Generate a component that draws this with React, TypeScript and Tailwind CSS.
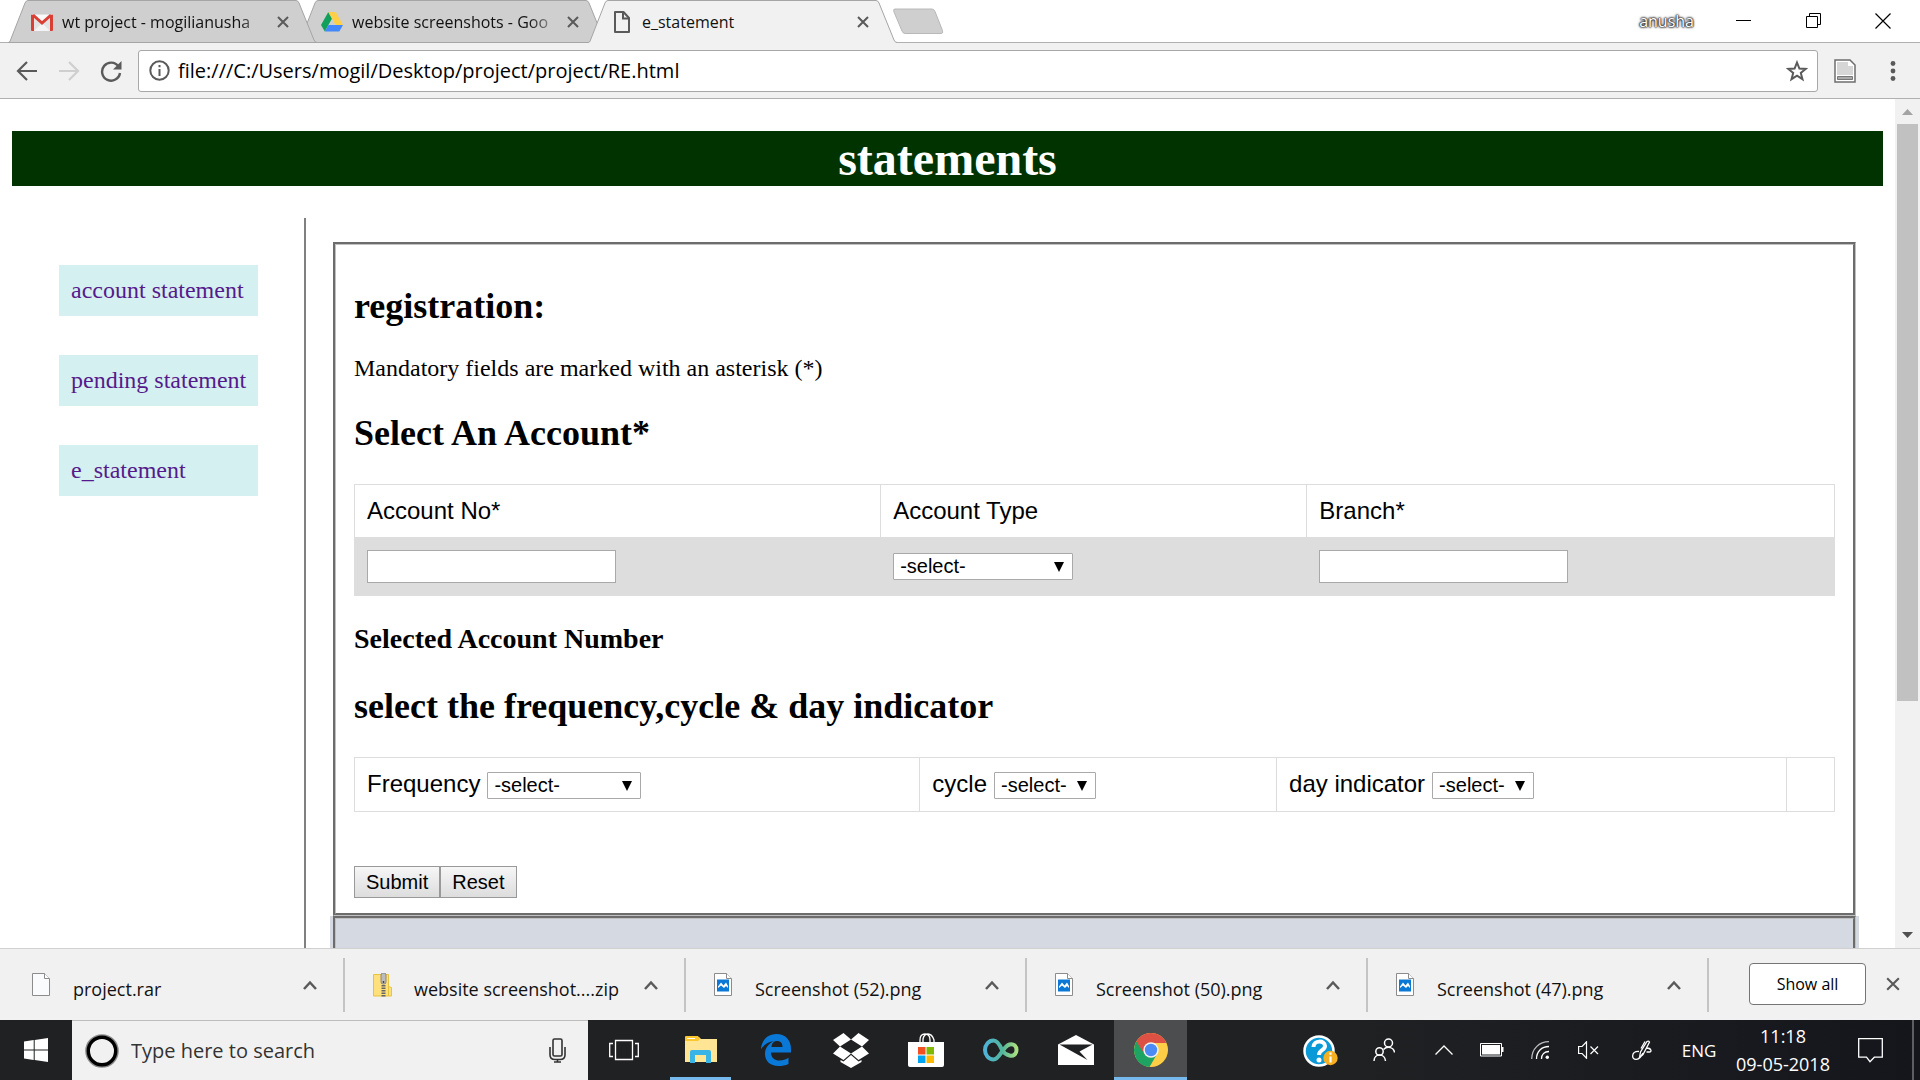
import type { ReactNode } from "react";

const uiFont = "font-['Open_Sans','Noto_Sans',sans-serif]";

/* ---------- small icons ---------- */

function FileIcon() {
  return (
    <svg width="24" height="24" viewBox="0 0 24 24" fill="none" stroke="#5a5a5a" strokeWidth="2">
      <path d="M5 2h8.500l5.500 6v14H5z" strokeLinejoin="round" />
      <path d="M13 2.500V8.500h6" />
    </svg>
  );
}

function GmailIcon() {
  return (
    <svg width="24" height="24" viewBox="0 0 24 24">
      <rect x="1" y="4" width="22" height="17" rx="1" fill="#e3e3e3" />
      <path d="M4 21 12 13l8 8z" fill="#f4f4f4" />
      <path d="M3 5l9 8 9-8" fill="#fafafa" stroke="#d93f33" strokeWidth="3" />
      <path d="M1 5.500C1 4 2 4 4 5.500V21H2a1 1 0 0 1-1-1zM23 5.500C23 4 22 4 20 5.500V21h2a1 1 0 0 0 1-1z" fill="#d93f33" />
    </svg>
  );
}

function DriveIcon() {
  return (
    <svg width="24" height="24" viewBox="0 0 24 24">
      <path d="M8.300 2 1 15l3.800 6.500L12 8.500z" fill="#11a05c" />
      <path d="M8.300 2h7.500L23 15h-7.500z" fill="#ffcf48" />
      <path d="M4.800 21.500 8.500 15H23l-3.700 6.500z" fill="#4387fd" />
    </svg>
  );
}

function CrossIcon({ size = 12, width = 2, color = "#5a5a5a" }: { size?: number; width?: number; color?: string }) {
  return (
    <svg width={size} height={size} viewBox="0 0 12 12" stroke={color} strokeWidth={width} fill="none">
      <path d="M1 1l10 10M11 1 1 11" />
    </svg>
  );
}

function ChevronUp() {
  return (
    <svg width="14" height="10" viewBox="0 0 14 10" fill="none" stroke="#5a5a5a" strokeWidth="2.500">
      <path d="M1 9l6-6.500L13 9" />
    </svg>
  );
}

/* ---------- browser chrome ---------- */

type TabProps = { icon: ReactNode; title: string; active?: boolean; layer: string };

function Tab({ icon, title, active, layer }: TabProps) {
  return (
    <div className={`relative -mr-[19px] flex h-[43px] w-[309px] items-center pr-7 pl-[22px] ${layer}`}>
      <svg className="absolute inset-0 h-full w-full" viewBox="0 0 309 43">
        <path
          d="M0 42.500C1.500 42.500 2 41.500 2.500 40L17 3Q18 .5 20 .5H288Q290 .5 291 3L306 40Q307 42.500 309 42.500V43H0z"
          fill={active ? "#f1f1f1" : "#cfcfcf"}
        />
        <path
          d="M0 42.500C1.500 42.500 2 41.500 2.500 40L17 3Q18 .5 20 .5H288Q290 .5 291 3L306 40Q307 42.500 309 42.500"
          fill="none"
          stroke="#a5a5a5"
        />
        {!active && <path d="M0 42.500H309" stroke="#a5a5a5" />}
      </svg>
      <span className="relative mr-2 shrink-0">{icon}</span>
      <span
        className={`relative min-w-0 flex-1 whitespace-nowrap text-[16px] leading-6 text-[#111] ${
          active ? "" : "[mask-image:linear-gradient(to_right,black_82%,transparent_98%)]"
        }`}
      >
        {title}
      </span>
      <button type="button" aria-label={`Close ${title}`} className="relative shrink-0">
        <CrossIcon />
      </button>
    </div>
  );
}

function TabStrip() {
  return (
    <header className="flex h-[43px] shrink-0 items-stretch bg-white pl-2 shadow-[inset_0_-1px_0_#b0b0b0]">
      <Tab layer="z-20" icon={<GmailIcon />} title="wt project - mogilianusha" />
      <Tab layer="z-10" icon={<DriveIcon />} title="website screenshots - Goo" />
      <Tab layer="z-30" icon={<FileIcon />} title="e_statement" active />
      <button type="button" aria-label="New tab" className="ml-[14px] flex items-center">
        <svg width="52" height="27" viewBox="0 0 52 27">
          <path d="M3 1h37q2 0 3 2.500l7.500 19q1 3-1.500 3H13q-2 0-3-2.500L1.800 3.500Q1 1 3 1z" fill="#cfcfcf" stroke="#b8b8b8" />
        </svg>
      </button>
      <div className="ml-auto flex items-center pr-[2px] pb-[2px]">
        <span className="mr-[14px] text-[16px] leading-5 text-white [text-shadow:0_0_1px_#222,0_0_2px_#222,0_0_2px_#222,0_0_3px_#222]">
          anusha
        </span>
        <button type="button" aria-label="Minimize" className="flex w-[70px] justify-center">
          <svg width="15" height="15"><path d="M0 7.500h15" stroke="#000" /></svg>
        </button>
        <button type="button" aria-label="Restore" className="flex w-[70px] justify-center">
          <svg width="15" height="15" fill="none" stroke="#000">
            <path d="M.5 3.500h11v11H.5zM3.500 3.500v-3h11v11h-3" />
          </svg>
        </button>
        <button type="button" aria-label="Close" className="flex w-[70px] justify-center">
          <CrossIcon size={18} width={0.8} color="#000" />
        </button>
      </div>
    </header>
  );
}

function Toolbar() {
  return (
    <nav className="flex h-14 shrink-0 items-center border-b border-[#b0b0b0] bg-[#f1f1f1] pl-4" aria-label="Navigation">
      <div className="flex w-[122px] gap-5">
        <button type="button" aria-label="Back">
          <svg width="22" height="22" viewBox="0 0 22 22" fill="none" stroke="#5a5a5a" strokeWidth="2.200">
            <path d="M21 11H2.500M11 2l-9 9 9 9" />
          </svg>
        </button>
        <button type="button" aria-label="Forward">
          <svg width="22" height="22" viewBox="0 0 22 22" fill="none" stroke="#cfcfcf" strokeWidth="2.200">
            <path d="M1 11h18.500M11 2l9 9-9 9" />
          </svg>
        </button>
        <button type="button" aria-label="Reload">
          <svg width="22" height="22" viewBox="0 0 22 22" fill="none" stroke="#5a5a5a" strokeWidth="2.400">
            <path d="M18.500 6.500A9 9 0 1 0 20 13" />
            <path d="M21.500 1v8.500H13z" fill="#5a5a5a" stroke="none" />
          </svg>
        </button>
      </div>
      <div className="flex h-[42px] flex-1 items-center rounded-[3px] border border-[#a8a8a8] bg-white pr-[9px] pl-[10px]">
        <svg width="21" height="21" viewBox="0 0 21 21" fill="none" stroke="#5a5a5a" strokeWidth="2">
          <circle cx="10.500" cy="10.500" r="9.200" />
          <path d="M10.500 9v7M10.500 5v2.200" />
        </svg>
        <input
          aria-label="Address"
          className="ml-2 min-w-0 flex-1 bg-transparent text-[20px] leading-7 text-black outline-none"
          defaultValue="file:///C:/Users/mogil/Desktop/project/project/RE.html"
        />
        <button type="button" aria-label="Bookmark">
          <svg width="22" height="22" viewBox="0 0 22 22" fill="none" stroke="#5a5a5a" strokeWidth="2">
            <path d="M11 2.500l2.400 6 6.300.4-4.900 4 1.700 6.300L11 15.700l-5.500 3.500 1.700-6.300-4.900-4 6.300-.4z" />
          </svg>
        </button>
      </div>
      <button type="button" aria-label="Extension" className="ml-4">
        <svg width="22" height="24" viewBox="0 0 22 24">
          <path d="M1 1h15l5 5v17H1z" fill="#fff" stroke="#6e6e6e" strokeWidth="1.500" />
          <path d="M3 3h11v4h5v9H3z" fill="#d6d6d6" />
          <path d="M3.500 17.500h15v3h-15z" fill="#aaa" stroke="#777" />
        </svg>
      </button>
      <button type="button" aria-label="Menu" className="flex w-16 justify-center pl-[10px]">
        <svg width="6" height="20" fill="#5a5a5a">
          <circle cx="3" cy="2.500" r="2.400" />
          <circle cx="3" cy="10" r="2.400" />
          <circle cx="3" cy="17.500" r="2.400" />
        </svg>
      </button>
    </nav>
  );
}

function Scrollbar() {
  return (
    <div className="flex w-[25px] shrink-0 flex-col items-center bg-[#f1f1f1]" aria-hidden="true">
      <div className="flex h-[25px] items-center">
        <svg width="11" height="6"><path d="M0 6 5.500 0 11 6z" fill="#a3a3a3" /></svg>
      </div>
      <div className="h-[577px] w-[21px] bg-[#c1c1c1]" />
      <div className="mt-auto flex h-[26px] items-center">
        <svg width="11" height="6"><path d="M0 0h11L5.500 6z" fill="#505050" /></svg>
      </div>
    </div>
  );
}

/* ---------- page ---------- */

const navLinks = ["account statement", "pending statement", "e_statement"];

function SelectBox({ id, width }: { id: string; width: string }) {
  return (
    <span className={`relative inline-block ${width}`}>
      <select
        id={id}
        className="block h-[27px] w-full appearance-none rounded-[1px] border border-[#a9a9a9] bg-white pl-[6px] text-[20px] leading-[23px] text-black"
      >
        <option>-select-</option>
      </select>
      <svg className="pointer-events-none absolute top-[9px] right-[9px]" width="10" height="10">
        <path d="M0 0h10L5 10z" fill="#000" />
      </svg>
    </span>
  );
}

const cell = "border border-[#dddddd] p-3 text-left font-normal";
const heading = "text-[36px] leading-[41px] font-bold";
const groove = "[border:3px_groove_#c0c0c0]";
const textBox = "block h-[33px] w-[249px] border border-[#a9a9a9] bg-white px-1 text-[20px]";
const pushButton =
  "h-8 border border-[#999] bg-linear-to-b from-[#f6f6f6] to-[#dddddd] px-[11px] font-['Liberation_Sans',sans-serif] text-[20px] leading-7";

function StatementForm() {
  return (
    <form className={`px-[18px] pt-[41px] pb-[15px] ${groove}`}>
      <h2 className={heading}>registration:</h2>
      <p className="mt-[27px] mb-[31px] text-[24px] leading-7">Mandatory fields are marked with an asterisk (*)</p>
      <h2 className={`mb-[30px] ${heading}`}>Select An Account*</h2>
      <table className="w-full table-fixed border-collapse font-['Liberation_Sans',sans-serif] text-[24px] leading-7">
        <thead>
          <tr>
            <th className={`w-[35.550%] ${cell}`}><label htmlFor="account-no">Account No*</label></th>
            <th className={`w-[28.800%] ${cell}`}><label htmlFor="account-type">Account Type</label></th>
            <th className={cell}><label htmlFor="branch">Branch*</label></th>
          </tr>
        </thead>
        <tbody>
          <tr className="bg-[#dddddd]">
            <td className={cell}><input id="account-no" type="text" className={textBox} /></td>
            <td className={`${cell} leading-[0]`}><SelectBox id="account-type" width="w-[180px]" /></td>
            <td className={cell}><input id="branch" type="text" className={textBox} /></td>
          </tr>
        </tbody>
      </table>
      <h3 className="mt-[27px] mb-[31px] text-[28px] leading-8 font-bold">Selected Account Number</h3>
      <h2 className={`mb-[30px] ${heading}`}>select the frequency,cycle &amp; day indicator</h2>
      <table className="w-full table-fixed border-collapse font-['Liberation_Sans',sans-serif] text-[24px] leading-7">
        <tbody>
          <tr>
            <td className={`w-[38.200%] ${cell}`}>
              <div className="flex items-baseline gap-[7px]">
                <label htmlFor="frequency">Frequency</label>
                <SelectBox id="frequency" width="w-[154px]" />
              </div>
            </td>
            <td className={`w-[24.100%] ${cell}`}>
              <div className="flex items-baseline gap-[7px]">
                <label htmlFor="cycle">cycle</label>
                <SelectBox id="cycle" width="w-[102px]" />
              </div>
            </td>
            <td className={cell}>
              <div className="flex items-baseline gap-[7px]">
                <label htmlFor="day-indicator">day indicator</label>
                <SelectBox id="day-indicator" width="w-[102px]" />
              </div>
            </td>
            <td className={`w-[3.250%] ${cell}`} />
          </tr>
        </tbody>
      </table>
      <div className="mt-[54px] flex">
        <button type="submit" className={pushButton}>Submit</button>
        <button type="reset" className={pushButton}>Reset</button>
      </div>
    </form>
  );
}

function Page() {
  return (
    <div className="min-w-0 flex-1 overflow-hidden bg-white font-['Liberation_Serif',serif] text-black">
      <h1 className="mx-3 mt-8 bg-[#003300] text-center text-[48px] leading-[55px] font-bold text-white">statements</h1>
      <div className="mt-8 flex">
        <nav className="w-[306px] shrink-0 border-r-2 border-[#808080] pt-[47px] pr-[46px] pl-[59px]" aria-label="Statements">
          <ul className="flex flex-col gap-[39px]">
            {navLinks.map((label) => (
              <li key={label} className="bg-[#d5f0f1] p-3">
                <a href="#" className="block text-[24px] leading-[27px] whitespace-nowrap text-[#551a8b]">{label}</a>
              </li>
            ))}
          </ul>
        </nav>
        <main className="min-w-0 flex-1 pt-6 pr-9 pl-6">
          <div className="px-[3px]">
            <StatementForm />
          </div>
          <div className="bg-[#d5d9e2] px-[3px]">
            <div className={`h-40 ${groove}`} />
          </div>
        </main>
      </div>
    </div>
  );
}

/* ---------- downloads ---------- */

function BlankFile() {
  return (
    <svg width="18" height="23" viewBox="0 0 18 23" fill="#fafbfc" stroke="#8c8c8c">
      <path d="M.5.5h12l5 5v17H.5z" />
      <path d="M12.500.5v5h5" fill="#fff" />
    </svg>
  );
}

function ImageFile() {
  return (
    <svg width="18" height="23" viewBox="0 0 18 23">
      <path d="M.5.5h12l5 5v17H.5z" fill="#fff" stroke="#8c8c8c" />
      <path d="M12.500.5v5h5" fill="#fff" stroke="#8c8c8c" />
      <path d="M3 6.500h12v12H3z" fill="#0a78d4" />
      <path d="M4 15v-1.500l3-4 2.500 3L12 9.500l2 3.500v2l-2-2-2 2-3-2.500z" fill="#fff" />
    </svg>
  );
}

function ZipFile() {
  return (
    <svg width="19" height="24" viewBox="0 0 19 24">
      <path d="M.5 1.500h15v12l3 1v8.500H.5z" fill="#ffe07a" stroke="#e8c33c" />
      <path d="M15.500 13.500V23" stroke="#e8c33c" />
      <rect x="8" y="0" width="5" height="11" rx="2" fill="#bcbcbc" stroke="#777" strokeWidth=".8" />
      <path d="M10.500 8v2" stroke="#444" strokeWidth="1.500" />
      <path d="M10.500 12v12" stroke="#666" strokeWidth="4" strokeDasharray="1.500 1" />
    </svg>
  );
}

const downloads = [
  { name: "project.rar", icon: <BlankFile /> },
  { name: "website screenshot....zip", icon: <ZipFile /> },
  { name: "Screenshot (52).png", icon: <ImageFile /> },
  { name: "Screenshot (50).png", icon: <ImageFile /> },
  { name: "Screenshot (47).png", icon: <ImageFile /> },
];

function DownloadsBar() {
  return (
    <footer className="flex h-[72px] shrink-0 items-center border-t border-[#d0d0d0] bg-[#f1f1f1] pl-1">
      {downloads.map((item) => (
        <div key={item.name} className="flex h-[54px] w-[341px] items-center border-r-2 border-[#c4c4c4] pr-[26px] pl-7">
          <span className="w-[41px] shrink-0">{item.icon}</span>
          <span className="flex-1 pt-2 text-[18px] leading-6 whitespace-nowrap text-[#111]">{item.name}</span>
          <button type="button" aria-label={`Options for ${item.name}`}>
            <ChevronUp />
          </button>
        </div>
      ))}
      <div className="mr-5 ml-auto flex items-center gap-5 pb-[2px]">
        <button type="button" className="h-[42px] w-[117px] rounded-[4px] border border-[#757575] bg-white text-[16px] font-medium text-black">
          Show all
        </button>
        <button type="button" aria-label="Close downloads bar">
          <CrossIcon size={14} width={1.8} />
        </button>
      </div>
    </footer>
  );
}

/* ---------- taskbar ---------- */

const apps: { name: string; icon: ReactNode; state: string }[] = [
  {
    name: "Task view",
    state: "w-[73px] pr-[3px]",
    icon: (
      <svg width="30" height="24" viewBox="0 0 30 24" fill="none" stroke="#fff" strokeWidth="1.300">
        <path d="M6.500 2.500h17v19h-17zM4 5.500H.7v13H4M26 5.500h3.300v13H26" />
      </svg>
    ),
  },
  {
    name: "File Explorer",
    state: "mx-[6px] w-[61px] border-b-[3px] border-[#76b9ed] pt-[3px]",
    icon: (
      <svg width="32" height="28" viewBox="0 0 32 28">
        <path d="M0 1h14l2 2h16v23H0z" fill="#ffe594" />
        <path d="M0 1q0-1 1-1h12l2 3-2 2H0z" fill="#fcc72e" />
        <path d="M2 2.500h8" stroke="#fff" />
        <path d="M5 27V16q0-2 2-2h17q2 0 2 2v11h-5v-8H10v8z" fill="#38b5e6" />
      </svg>
    ),
  },
  {
    name: "Edge",
    state: "w-[73px]",
    icon: (
      <svg width="30" height="32" viewBox="0 0 30 32" fill="#0a78d7">
        <path d="M0 14C1.500 5 7.500 0 15.500 0 24 0 30 6 30 14.500V18.500H10C10 24 14 26.500 18.500 26.500c3.500 0 6-1 9-2.700V30c-3 1.400-6.300 2-10 2C9 32 4 27 4 20c0-6 3.500-10.500 9-13C8 7.500 3 10.500 0 15zM10.500 13h11c0-4-2-6-5.500-6-3.500 0-5.200 2.600-5.500 6z" />
      </svg>
    ),
  },
  {
    name: "Dropbox",
    state: "w-[73px]",
    icon: (
      <svg width="36" height="35" viewBox="0 0 36 35" fill="#fff">
        <path d="M10.500 0 0 7l7 6.500L18 6.500zM25.500 0 18 6.500l11 7L36 7zM0 20.500l7-7 11 7L10.500 27zM36 20.500l-7-7-11 7L25.500 27zM18 22l-7.500 6.500L7.500 27v2L18 35l10.500-6v-2l-3 1.500z" />
      </svg>
    ),
  },
  {
    name: "Store",
    state: "w-[73px]",
    icon: (
      <svg width="36" height="34" viewBox="0 0 36 34">
        <path d="M12 10V7q0-6 5-6t5 6v3M15 10V6q1-5 5-5t6 6v3" fill="none" stroke="#fff" strokeWidth="1.300" />
        <path d="M0 9h36v23q0 2-2 2H2q-2 0-2-2z" fill="#fff" />
        <path d="M10 14h7.500v7.500H10z" fill="#f25022" />
        <path d="M18.500 14H26v7.500h-7.500z" fill="#7fba00" />
        <path d="M10 22.500h7.500V30H10z" fill="#00a4ef" />
        <path d="M18.500 22.500H26V30h-7.500z" fill="#ffb900" />
      </svg>
    ),
  },
  {
    name: "Connect",
    state: "w-[73px]",
    icon: (
      <svg width="36" height="24" viewBox="0 0 36 24" fill="none" strokeWidth="4">
        <defs>
          <linearGradient id="loop" x1="0" x2="1">
            <stop offset="0" stopColor="#4fb3d6" />
            <stop offset=".55" stopColor="#52b59b" />
            <stop offset="1" stopColor="#aae07f" />
          </linearGradient>
        </defs>
        <path
          d="M19 12C16 5 13.500 2.500 10.500 2.500A8.500 9.500 0 0 0 10.500 21.500C17 21.500 19 9 26.500 6.500c4-1.300 7 1.500 7 5.500s-3 6.500-7 5.500C22.500 16.500 21 15.500 19 12z"
          stroke="url(#loop)"
        />
      </svg>
    ),
  },
  {
    name: "Mail",
    state: "w-[73px]",
    icon: (
      <svg width="36" height="30" viewBox="0 0 36 30">
        <path d="M0 9.500 18 0l18 9.500V30H0z" fill="#fff" />
        <path d="M1.500 9.500h33L21.500 16.500 29.500 25z" fill="#202123" />
      </svg>
    ),
  },
  {
    name: "Chrome",
    state: "w-[73px] bg-[#4c4d4f] border-b-[3px] border-[#76b9ed] pt-[3px]",
    icon: (
      <svg width="34" height="34" viewBox="0 0 34 34">
        <circle cx="17" cy="17" r="17" fill="#ffcd46" />
        <path d="M2.300 8.500A17 17 0 0 0 15.500 34L23 21z" fill="#1da362" />
        <path d="M2.300 8.500A17 17 0 0 1 31.700 8.500L32 10H17L10.500 21z" fill="#dd5144" />
        <circle cx="17" cy="17" r="7.700" fill="#f1f1f1" />
        <circle cx="17" cy="17" r="6.200" fill="#4c8bf5" />
      </svg>
    ),
  },
];

const tray: { name: string; width: string; icon: ReactNode }[] = [
  {
    name: "Help",
    width: "w-14 pt-[3px]",
    icon: (
      <svg width="36" height="34" viewBox="0 0 36 34">
        <circle cx="17" cy="16" r="14.500" fill="#0a9ad8" stroke="#fff" strokeWidth="2.500" />
        <path d="M11.500 12c0-7 11.500-7 11.500-1 0 4.500-6 4-6 9" fill="none" stroke="#fff" strokeWidth="4" />
        <circle cx="17" cy="25" r="2.500" fill="#fff" />
        <circle cx="28.500" cy="23" r="7.200" fill="#f5b021" />
        <path d="M28.500 21.500v6M28.500 17.500v2.300" stroke="#fff" strokeWidth="2.200" />
      </svg>
    ),
  },
  {
    name: "People",
    width: "w-[72px]",
    icon: (
      <svg width="22" height="24" viewBox="0 0 22 24" fill="none" stroke="#fff" strokeWidth="1.500">
        <circle cx="15.500" cy="5" r="4" />
        <circle cx="6.500" cy="13.500" r="3.700" />
        <path d="M1 23c0-8 11-8 11.500 0M10.500 11.500c4-4 10.500-2 11 3" />
      </svg>
    ),
  },
  {
    name: "Show hidden icons",
    width: "w-12",
    icon: (
      <svg width="18" height="10" viewBox="0 0 18 10" fill="none" stroke="#fff" strokeWidth="1.300">
        <path d="M.5 9.500 9 1l8.500 8.500" />
      </svg>
    ),
  },
  {
    name: "Battery",
    width: "w-12",
    icon: (
      <svg width="24" height="14" viewBox="0 0 24 14">
        <path d="M.5.5h21v12.500H.5z" fill="none" stroke="#fff" />
        <path d="M2 2h18v9.500H2zM22 4h1.500v5H22z" fill="#fff" />
      </svg>
    ),
  },
  {
    name: "Network",
    width: "w-12",
    icon: (
      <svg width="18" height="18" viewBox="0 0 18 18" fill="none" stroke="#fff" strokeWidth="1.300">
        <path d="M.7 18C.7 8 8 .7 18 .7" opacity=".7" />
        <path d="M5.500 18C5.500 10.500 10.500 5.500 18 5.500M10.500 18c0-4.500 3-7.500 7.500-7.500" />
        <circle cx="16.300" cy="16.300" r="1.700" fill="#fff" stroke="none" />
      </svg>
    ),
  },
  {
    name: "Volume",
    width: "w-12",
    icon: (
      <svg width="21" height="18" viewBox="0 0 21 18" fill="none" stroke="#fff" strokeWidth="1.200">
        <path d="M.6 5.500h3.500L8.500.8v16.400L4.100 12.500H.6zM12.500 5.500l7.500 7.500M20 5.500 12.500 13" />
      </svg>
    ),
  },
  {
    name: "Windows Ink",
    width: "ml-[6px] w-12",
    icon: (
      <svg width="20" height="20" viewBox="0 0 20 20" fill="none" stroke="#fff" strokeWidth="1.300">
        <path d="M7.500 17.500 8.500 12 15 1.500q1.500-1 2.500.5L11 14.500zM13 1.500l-4 7M7 11.500C-1 11-1 20 4.500 19.300c3 0 4-2 6.500-6.300M14.500 8c5 0 5.500 4 3 4h-3" />
      </svg>
    ),
  },
];

function Taskbar() {
  return (
    <footer className="flex h-[60px] shrink-0 bg-linear-to-r from-[#202123] from-70% to-[#14161c] text-white">
      <button type="button" aria-label="Start" className="flex w-[72px] items-center justify-center">
        <svg width="24" height="24" viewBox="0 0 24 24" fill="#fff">
          <path d="M0 3.400 9.700 2v9.500H0zM10.700 1.900 24 0v11.500H10.700zM0 12.500h9.700V22L0 20.600zM10.700 12.500H24V24l-13.300-1.900z" />
        </svg>
      </button>
      <div className="mr-px flex w-[516px] items-center border-t border-[#bdbdbd] bg-[#f1f1f1] pr-[22px] pl-[13px]">
        <svg width="34" height="34" viewBox="0 0 34 34" fill="none">
          <circle cx="17" cy="17" r="15.800" stroke="#8a8a8a" strokeWidth="2" />
          <circle cx="17" cy="17" r="13.700" stroke="#000" strokeWidth="3.400" />
        </svg>
        <input
          aria-label="Search"
          placeholder="Type here to search"
          className="ml-3 min-w-0 flex-1 bg-transparent text-[20px] leading-7 outline-none placeholder:text-[#333]"
        />
        <button type="button" aria-label="Voice search">
          <svg width="17" height="25" viewBox="0 0 17 25" fill="none" stroke="#333" strokeWidth="1.600">
            <rect x="4" y="1" width="9" height="17" rx="1.500" />
            <path d="M1 9v8q0 4.500 5 4.500h5q5 0 5-4.500V9M8.500 21.500V24M5 24h7" />
          </svg>
        </button>
      </div>
      <div className="flex gap-[2px]">
        {apps.map((app) => (
          <button key={app.name} type="button" aria-label={app.name} className={`flex items-center justify-center ${app.state}`}>
            {app.icon}
          </button>
        ))}
      </div>
      <div className="ml-auto flex items-center">
        {tray.map((item) => (
          <button key={item.name} type="button" aria-label={item.name} className={`flex justify-center ${item.width}`}>
            {item.icon}
          </button>
        ))}
        <button type="button" className="w-[66px] pt-[2px] text-[17px] leading-6">ENG</button>
        <button type="button" className="w-[102px] text-[18px] leading-7 whitespace-nowrap">
          <span className="block">11:18</span>
          <span className="block">09-05-2018</span>
        </button>
        <button type="button" aria-label="Notifications" className="mr-[6px] flex w-[72px] justify-center">
          <svg width="25" height="25" viewBox="0 0 25 25" fill="none" stroke="#fff" strokeWidth="1.300">
            <path d="M.7.700h23.600v18.500h-8L12 23.700l-3.500-4.500H.7z" />
          </svg>
        </button>
        <div className="h-full w-2 border-l-2 border-[#5c5e63]" />
      </div>
    </footer>
  );
}

export default function App() {
  return (
    <div className={`flex h-screen flex-col overflow-hidden ${uiFont}`}>
      <TabStrip />
      <Toolbar />
      <div className="flex min-h-0 flex-1">
        <Page />
        <Scrollbar />
      </div>
      <DownloadsBar />
      <Taskbar />
    </div>
  );
}
